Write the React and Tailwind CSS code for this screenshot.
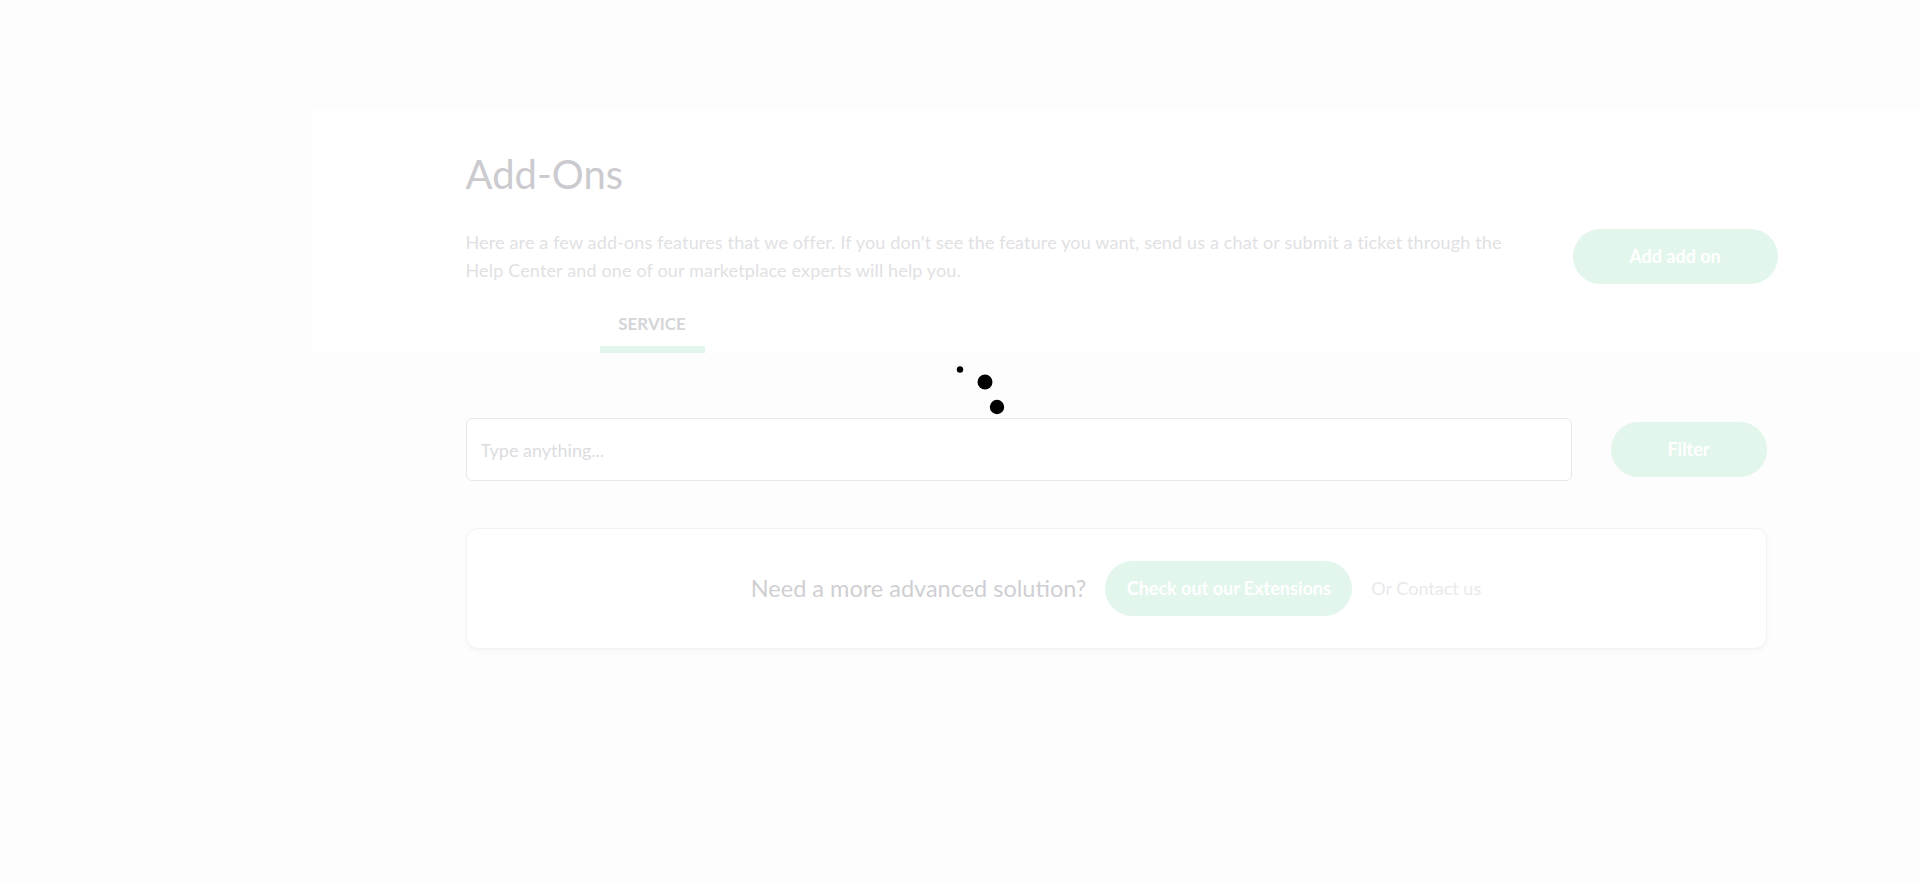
export default function App() {
  return (
    <div className="relative min-h-[885px] w-full bg-[#fdfdfd] font-['Lato','Liberation_Sans',sans-serif]">
      <div className="flex">
        {/* sidebar slot, empty while loading */}
        <div className="w-[312px] shrink-0" />

        <main className="flex-1 pt-[110px]">
          <header className="bg-white shadow-[0_1px_2px_rgba(0,0,0,0.012)]">
            <div className="mx-auto w-[1301px] pt-[40px]">
              <h1 className="text-[40px] leading-[48px] font-normal text-[#cbcbcf]">Add-Ons</h1>

              <div className="mt-[30px] flex items-center justify-between">
                <p className="w-[1050px] text-[18px] leading-[28px] tracking-[0.15px] text-[#e1e1e4]">
                  Here are a few add-ons features that we offer. If you don't see the feature you want, send us a chat or submit a ticket through the Help Center and one of our marketplace experts will help you.
                </p>
                <button className="mr-[-11px] h-[55px] w-[205px] rounded-full bg-[#e2f6ec] text-[18px] font-bold text-white">
                  Add add on
                </button>
              </div>

              <div className="mt-[28px] ml-[134px] flex">
                <button className="flex w-[105px] flex-col items-center">
                  <span className="text-[17px] leading-[24px] font-bold uppercase text-[#d5d5d9]">Service</span>
                  <span className="mt-[10px] h-[7px] w-full bg-[#e2f6ec]" />
                </button>
              </div>
            </div>
          </header>

          <div className="mx-auto w-[1301px] pt-[65px]">
            <div className="flex items-center gap-[39px]">
              <input
                type="text"
                placeholder="Type anything..."
                className="h-[63px] flex-1 rounded-[6px] border border-[#e8e8ea] bg-white px-[14px] text-[18px] outline-none placeholder:text-[#dcdcdf]"
              />
              <button className="h-[55px] w-[156px] rounded-full bg-[#e2f6ec] text-[18px] font-bold text-white">
                Filter
              </button>
            </div>

            <div className="mt-[47px] flex h-[121px] items-center justify-center gap-[19px] rounded-[12px] border border-[#f3f3f3] bg-white shadow-[0_2px_6px_rgba(0,0,0,0.03)]">
              <span className="text-[23.5px] text-[#cfcfd3]">Need a more advanced solution?</span>
              <button className="h-[55px] w-[247px] rounded-full bg-[#e2f6ec] text-[18px] font-bold text-white">
                Check out our Extensions
              </button>
              <a className="text-[18px] text-[#e9e9eb]">Or Contact us</a>
            </div>
          </div>
        </main>
      </div>

      {/* loading spinner over the page */}
      <svg className="absolute left-[920px] top-[362px]" width="100" height="100" viewBox="0 0 100 100">
        <circle cx="40" cy="7.5" r="3.2" fill="#000" />
        <circle cx="65" cy="20" r="7.5" fill="#000" />
        <circle cx="77" cy="45" r="7.2" fill="#000" />
      </svg>
    </div>
  )
}
